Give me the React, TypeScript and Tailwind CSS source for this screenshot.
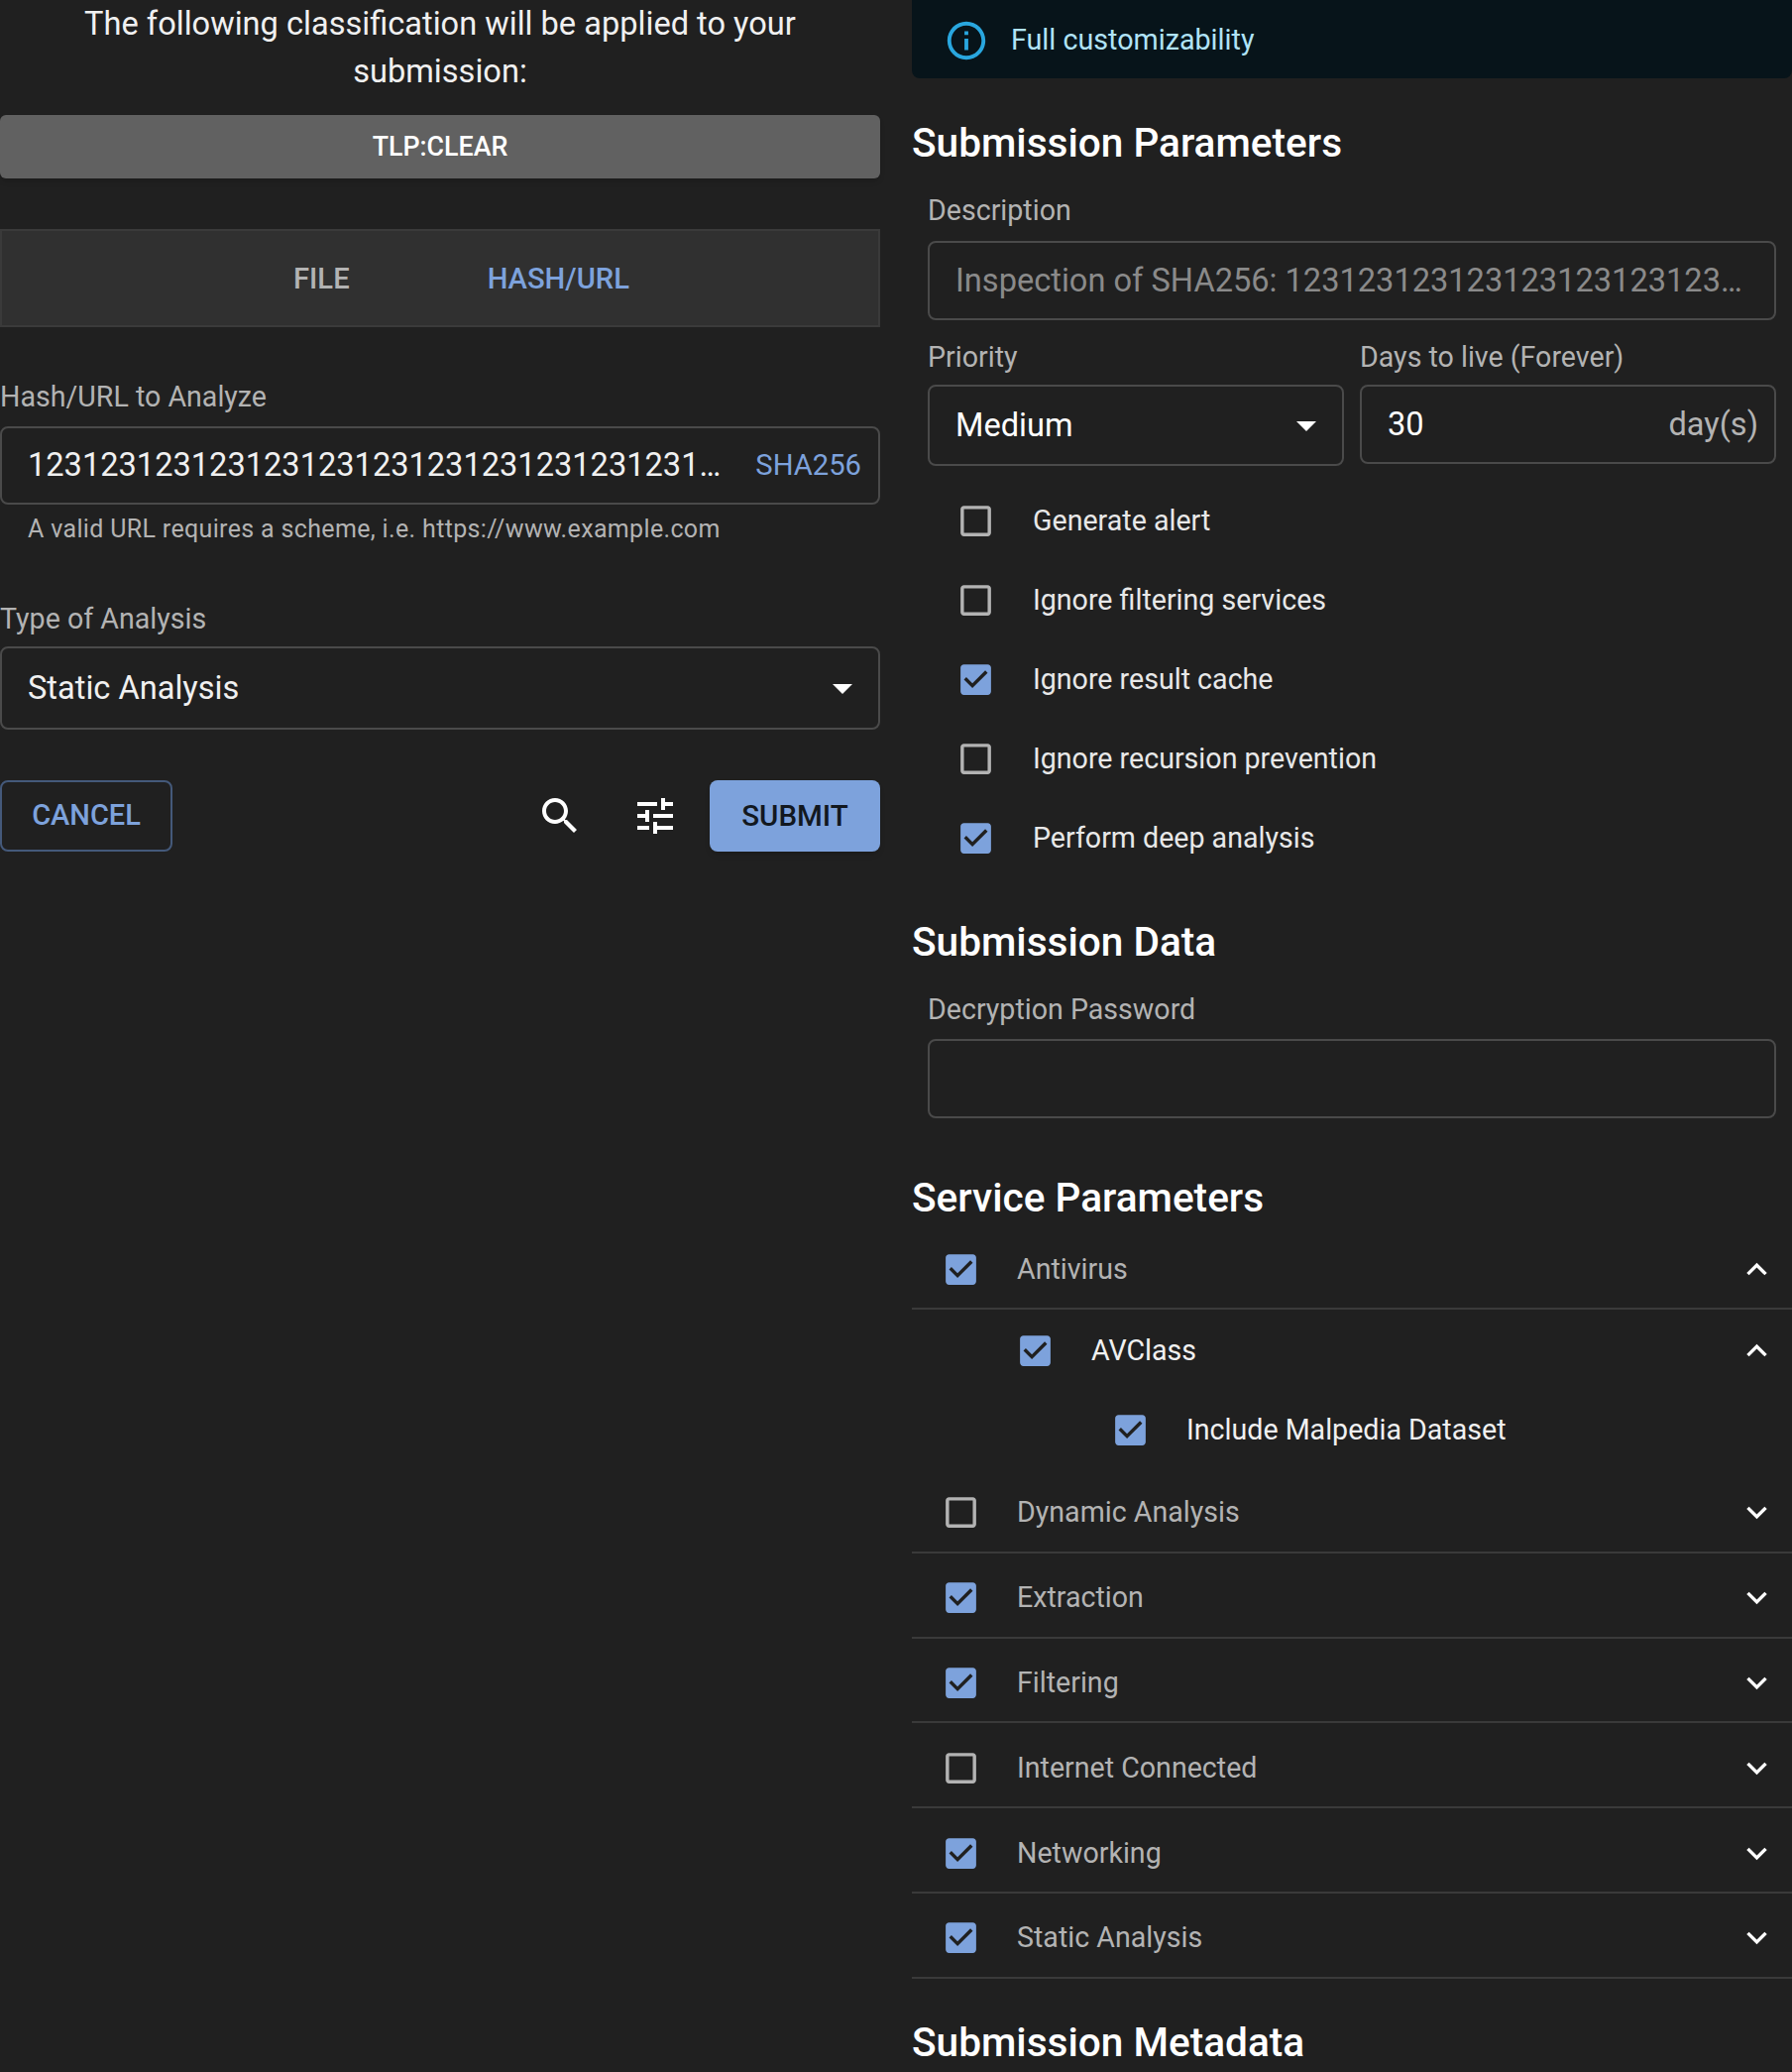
import type { ReactNode } from "react";

const FONT = "font-['Roboto',_sans-serif]";

function MuiIcon({ d, className }: { d: string; className: string }) {
  return (
    <svg viewBox="0 0 24 24" fill="currentColor" className={className}>
      <path d={d} />
    </svg>
  );
}

const CHECKED = "M19 3H5c-1.11 0-2 .9-2 2v14c0 1.1.89 2 2 2h14c1.11 0 2-.9 2-2V5c0-1.1-.89-2-2-2zm-9 14l-5-5 1.41-1.41L10 14.17l7.59-7.59L19 8l-9 9z";
const UNCHECKED = "M19 5v14H5V5h14m0-2H5c-1.1 0-2 .9-2 2v14c0 1.1.9 2 2 2h14c1.1 0 2-.9 2-2V5c0-1.1-.9-2-2-2z";
const DROP = "M7 10l5 5 5-5z";
const MORE = "M16.59 8.59 12 13.17 7.41 8.59 6 10l6 6 6-6z";
const LESS = "m12 8-6 6 1.41 1.41L12 10.83l4.59 4.58L18 14z";
const SEARCH = "M15.5 14h-.79l-.28-.27C15.41 12.59 16 11.11 16 9.5 16 5.91 13.09 3 9.5 3S3 5.91 3 9.5 5.91 16 9.5 16c1.61 0 3.09-.59 4.23-1.57l.27.28v.79l5 4.99L20.49 19l-4.99-5zm-6 0C7.01 14 5 11.99 5 9.5S7.01 5 9.5 5 14 7.01 14 9.5 11.99 14 9.5 14z";
const TUNE = "M3 17v2h6v-2H3zM3 5v2h10V5H3zm10 16v-2h8v-2h-8v-2h-2v6h2zM7 9v2H3v2h4v2h2V9H7zm14 4v-2H11v2h10zm-6-4h2V7h4V5h-4V3h-2v6z";
const INFO = "M11 7h2v2h-2zm0 4h2v6h-2zm1-9C6.48 2 2 6.48 2 12s4.48 10 10 10 10-4.48 10-10S17.52 2 12 2zm0 18c-4.41 0-8-3.59-8-8s3.59-8 8-8 8 3.59 8 8-3.59 8-8 8z";

function Check({ on }: { on: boolean }) {
  return (
    <MuiIcon
      d={on ? CHECKED : UNCHECKED}
      className={on ? "w-[41px] h-[41px] shrink-0 text-[#7da2dc]" : "w-[41px] h-[41px] shrink-0 text-[#b3b3b3]"}
    />
  );
}

function Label({ children }: { children: ReactNode }) {
  return <div className="text-[28.6px] leading-[40px] text-[#b3b3b3]">{children}</div>;
}

function Box({ children, className }: { children?: ReactNode; className: string }) {
  return (
    <div className={`border-2 border-[#4a4a4a] rounded-[8px] flex items-center pl-[26px] text-[32.6px] ${className}`}>
      {children}
    </div>
  );
}

function Heading({ children, className }: { children: ReactNode; className: string }) {
  return <h2 className={`text-[40.6px] leading-[48px] font-medium text-white ${className}`}>{children}</h2>;
}

function Option({ label, on }: { label: string; on: boolean }) {
  return (
    <div className="h-[80px] flex items-center pl-[44px]">
      <Check on={on} />
      <span className="ml-[37px] text-[28.6px] text-[#e8e8e8]">{label}</span>
    </div>
  );
}

function Service({ label, on, open, tall }: { label: string; on: boolean; open?: boolean; tall?: boolean }) {
  return (
    <div className={`${tall ? "h-[85.8px]" : "h-[85px]"} pt-[6px] border-b-2 border-[#3a3a3a] flex items-center pl-[29px] pr-[15.5px]`}>
      <Check on={on} />
      <span className="ml-[36px] text-[28.6px] text-[#b3b3b3] flex-1">{label}</span>
      <MuiIcon d={open ? LESS : MORE} className="w-[41px] h-[41px] text-white" />
    </div>
  );
}

export default function App() {
  return (
    <div className={`${FONT} w-[1808px] h-[2090px] overflow-hidden bg-[#202020] text-white flex gap-[32px]`}>
      <div className="w-[888px] shrink-0 flex flex-col">
        <p className="text-[32.6px] leading-[48px] text-center text-[#f0f0f0] px-[60px]">
          The following classification will be applied to your submission:
        </p>
        <div className="mt-[20px] h-[64px] rounded-[6px] bg-[#616161] flex items-center justify-center text-[26.8px] font-medium shadow-md">
          TLP:CLEAR
        </div>
        <div className="mt-[51px] h-[99px] pt-[2px] pl-[43px] bg-[#303030] border-2 border-[#3a3a3a] flex items-center justify-center gap-[139px] text-[29.2px] font-medium">
          <span className="text-[#b3b3b3]">FILE</span>
          <span className="text-[#7da2dc]">HASH/URL</span>
        </div>
        <div className="mt-[50px]"><Label>Hash/URL to Analyze</Label></div>
        <Box className="mt-[10px] h-[79px] pr-[17px] justify-between">
          <span className="text-[#f0f0f0]">1231231231231231231231231231231231231…</span>
          <span className="text-[29.2px] text-[#7da2dc]">SHA256</span>
        </Box>
        <div className="mt-[9px] pl-[28px] text-[25px] leading-[32px] tracking-[0.34px] text-[#b3b3b3]">
          A valid URL requires a scheme, i.e. https://www.example.com
        </div>
        <div className="mt-[54px]"><Label>Type of Analysis</Label></div>
        <Box className="mt-[8px] h-[84px] pr-[12px] justify-between">
          <span className="text-[#f0f0f0]">Static Analysis</span>
          <MuiIcon d={DROP} className="w-[48px] h-[48px] text-white" />
        </Box>
        <div className="mt-[51px] h-[72px] flex items-center">
          <div className="w-[174px] h-full border-2 border-[#44597a] rounded-[8px] flex items-center justify-center text-[29px] font-medium text-[#7da2dc]">
            CANCEL
          </div>
          <div className="flex-1" />
          <MuiIcon d={SEARCH} className="w-[48px] h-[48px] text-white" />
          <MuiIcon d={TUNE} className="ml-[48px] w-[48px] h-[48px] text-white" />
          <div className="ml-[31px] w-[172px] h-full rounded-[8px] bg-[#7da2dc] flex items-center justify-center text-[29.5px] font-medium text-[#12181f] shadow-md">
            SUBMIT
          </div>
        </div>
      </div>

      <div className="flex-1 flex flex-col">
        <div className="h-[79px] bg-[#07141a] rounded-b-[8px] flex items-center pl-[32px] pt-[3px]">
          <MuiIcon d={INFO} className="w-[46px] h-[46px] text-[#29a7df]" />
          <span className="ml-[22px] text-[28.7px] text-[#b0e3f7]">Full customizability</span>
        </div>
        <Heading className="mt-[41px]">Submission Parameters</Heading>
        <div className="px-[16px]">
          <div className="mt-[24px]"><Label>Description</Label></div>
          <Box className="mt-[11px] h-[80px] text-[#8a8a8a]">Inspection of SHA256: 123123123123123123123123…</Box>
          <div className="mt-[17px] flex gap-[16px]">
            <div className="flex-1">
              <Label>Priority</Label>
              <Box className="mt-[8px] h-[82px] pr-[12px] justify-between">
                <span>Medium</span>
                <MuiIcon d={DROP} className="w-[48px] h-[48px] text-white" />
              </Box>
            </div>
            <div className="flex-1">
              <Label>Days to live (Forever)</Label>
              <Box className="mt-[8px] h-[80px] pr-[16px] justify-between">
                <span>30</span>
                <span className="text-[#b3b3b3]">day(s)</span>
              </Box>
            </div>
          </div>
        </div>
        <div className="mt-[15px]">
          <Option label="Generate alert" on={false} />
          <Option label="Ignore filtering services" on={false} />
          <Option label="Ignore result cache" on={true} />
          <Option label="Ignore recursion prevention" on={false} />
          <Option label="Perform deep analysis" on={true} />
        </div>
        <Heading className="mt-[41px]">Submission Data</Heading>
        <div className="px-[16px]">
          <div className="mt-[24px]"><Label>Decryption Password</Label></div>
          <Box className="mt-[10px] h-[80px]" />
        </div>
        <Heading className="mt-[56px]">Service Parameters</Heading>
        <div className="mt-[4px]">
          <Service label="Antivirus" on={true} open={true} />
          <div className="h-[80px] pt-[2px] flex items-center pl-[104px] pr-[15.5px]">
            <Check on={true} />
            <span className="ml-[36px] text-[28.6px] text-[#f0f0f0] flex-1">AVClass</span>
            <MuiIcon d={LESS} className="w-[41px] h-[41px] text-white" />
          </div>
          <div className="h-[80px] pt-[2px] flex items-center pl-[200px]">
            <Check on={true} />
            <span className="ml-[36px] text-[28.6px] text-[#f0f0f0]">Include Malpedia Dataset</span>
          </div>
          <Service label="Dynamic Analysis" on={false} tall />
          <Service label="Extraction" on={true} tall />
          <Service label="Filtering" on={true} tall />
          <Service label="Internet Connected" on={false} tall />
          <Service label="Networking" on={true} tall />
          <Service label="Static Analysis" on={true} tall />
        </div>
        <Heading className="mt-[40px]">Submission Metadata</Heading>
      </div>
    </div>
  );
}
